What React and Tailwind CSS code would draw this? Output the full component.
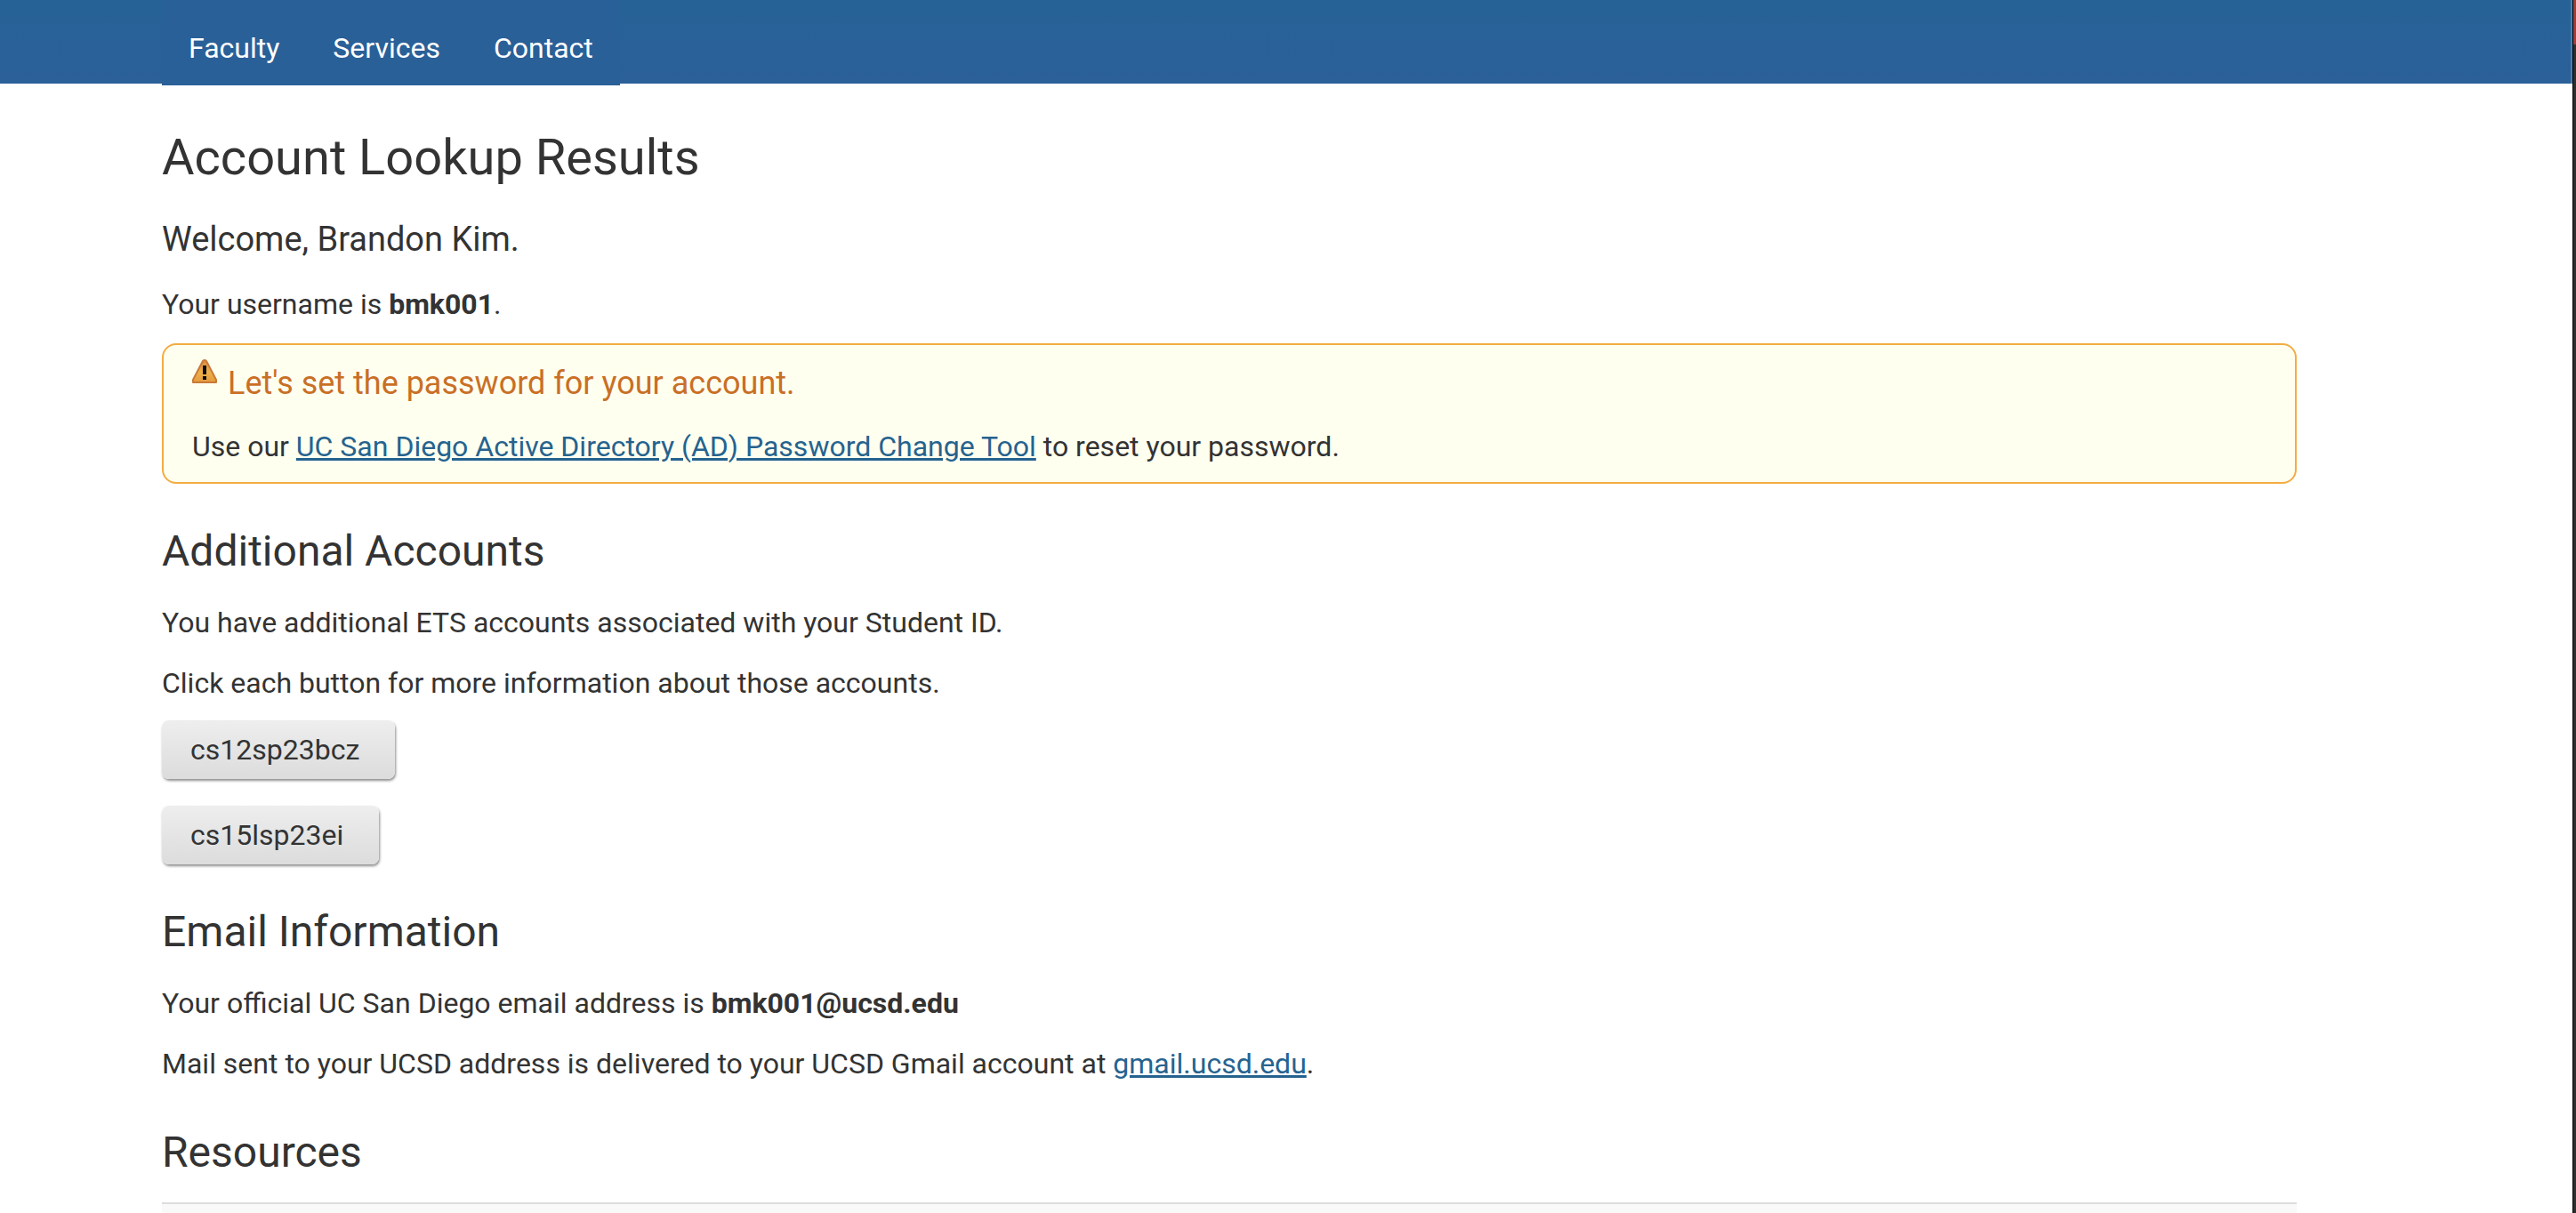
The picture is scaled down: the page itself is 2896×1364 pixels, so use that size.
const navItems = ["Faculty", "Services", "Contact"];
const accounts = ["cs12sp23bcz", "cs15lsp23ei"];

function WarningIcon() {
  return (
    <svg viewBox="0 0 28 28" className="h-7 w-7 shrink-0" aria-hidden="true">
      <defs>
        <linearGradient id="warn" x1="0" y1="0" x2="0" y2="1">
          <stop offset="0" stopColor="#d98a45" />
          <stop offset="0.55" stopColor="#eeb04a" />
          <stop offset="1" stopColor="#e39a3c" />
        </linearGradient>
      </defs>
      <path d="M12 2 Q14 0 16 2 L27 23 V26 H1 V23 Z" fill="url(#warn)" stroke="#c97a3a" strokeWidth="2" strokeLinejoin="round" />
      <path d="M12 7 H16 V17 H12 Z M12 19 H16 V23 H12 Z" fill="#0d0d0d" />
    </svg>
  );
}

function Heading({ children }) {
  return <h2 className="mt-12 mb-7 text-[48px] leading-[56px]">{children}</h2>;
}

function TextLink({ children }) {
  return (
    <a href="#" className="text-[#25638f] underline decoration-[3px]">
      {children}
    </a>
  );
}

export default function App() {
  return (
    <div className="flex h-screen overflow-hidden bg-white font-['Roboto',sans-serif] text-[32px] leading-[48px] text-[#333]">
      <div className="min-w-0 flex-1">
        <header className="h-[94px] border-r-2 border-[#4a80b0] bg-linear-to-b from-[#266296] to-[#2b6099] pl-[182px]">
          <nav className="flex h-24 w-fit bg-[#2a6098]">
            {navItems.map((item) => (
              <a key={item} href="#" className="px-[30px] pt-[30px] text-white">
                {item}
              </a>
            ))}
          </nav>
        </header>
        <main className="mr-[310px] ml-[182px] pt-[50px]">
          <h1 className="text-[56px] leading-[66px]">Account Lookup Results</h1>
          <h3 className="mt-9 text-[38px] leading-[46px]">Welcome, Brandon Kim.</h3>
          <p className="mt-[26px]">
            Your username is <strong className="font-bold">bmk001</strong>.
          </p>
          <section className="mt-5 rounded-[16px] border-2 border-[#f3ac42] bg-[#fffff0] px-8 pt-4 pb-4">
            <div className="flex gap-3">
              <WarningIcon />
              <h4 className="pt-1.5 text-[36px] leading-[42px] text-[#c96f26]">Let's set the password for your account.</h4>
            </div>
            <p className="mt-[26px]">
              Use our <TextLink>UC San Diego Active Directory (AD) Password Change Tool</TextLink> to reset your password.
            </p>
          </section>

          <Heading>Additional Accounts</Heading>
          <p>You have additional ETS accounts associated with your Student ID.</p>
          <p className="mt-5">Click each button for more information about those accounts.</p>
          <div className="mt-[18px] flex flex-col items-start gap-[30px]">
            {accounts.map((name) => (
              <button
                key={name}
                type="button"
                className="h-[66px] rounded-[8px] bg-linear-to-b from-[#eee] to-[#dcdcdc] pr-10 pl-8 shadow-[1px_2px_3px_rgba(0,0,0,0.45)]"
              >
                {name}
              </button>
            ))}
          </div>

          <Heading>Email Information</Heading>
          <p>
            Your official UC San Diego email address is <strong className="font-bold">bmk001@ucsd.edu</strong>
          </p>
          <p className="mt-5">
            Mail sent to your UCSD address is delivered to your UCSD Gmail account at <TextLink>gmail.ucsd.edu</TextLink>.
          </p>

          <Heading>Resources</Heading>
          <div className="h-12 border-t-2 border-[#ddd] bg-[#f9f9f9]" />
        </main>
      </div>
      <div className="flex w-1 flex-col border-l border-black bg-[#2e2e2e]">
        <div className="h-[50px] bg-[#a33c38]" />
      </div>
    </div>
  );
}
